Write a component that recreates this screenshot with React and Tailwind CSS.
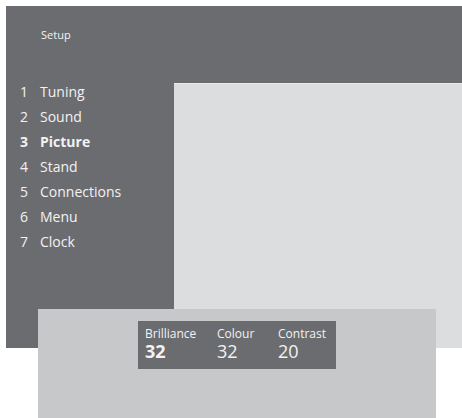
const menuItems = [
  { n: "1", label: "Tuning" },
  { n: "2", label: "Sound" },
  { n: "3", label: "Picture", active: true },
  { n: "4", label: "Stand" },
  { n: "5", label: "Connections" },
  { n: "6", label: "Menu" },
  { n: "7", label: "Clock" },
];

const values = [
  { label: "Brilliance", value: "32", bold: true, w: "w-[72px]" },
  { label: "Colour", value: "32", w: "w-[61px]" },
  { label: "Contrast", value: "20", w: "w-[58px]" },
];

export default function App() {
  return (
    <div className="w-[462px] h-[418px] bg-white overflow-hidden font-['Open_Sans',sans-serif] text-[#f2f2f2]">
      <div className="ml-[6px] mt-[6px] h-[342px] bg-[#6b6c70] flex">
        <div className="w-[168px] shrink-0 pl-[14px]">
          <p className="mt-[21px] ml-[21px] text-[11px] leading-[16px]">Setup</p>
          <ul className="mt-[36px]">
            {menuItems.map((item) => (
              <li
                key={item.n}
                className={`flex text-[14px] leading-[25px] ${item.active ? "font-bold" : ""}`}
              >
                <span className="w-[20px]">{item.n}</span>
                <span>{item.label}</span>
              </li>
            ))}
          </ul>
        </div>
        <div className="flex-1 pt-[77px] flex flex-col">
          <div className="flex-1 bg-[#dcdddf] border-t border-[#e8e9ea]" />
        </div>
      </div>

      <div className="relative -mt-[39px] ml-[38px] w-[398px] h-[109px] bg-[#c7c8ca] pt-[12px] pl-[100px]">
        <div className="w-[198px] h-[48px] bg-[#6b6c70] flex pl-[7px] pt-[6px]">
          {values.map((v) => (
            <div key={v.label} className={v.w}>
              <div className="text-[12px] leading-[14px]">{v.label}</div>
              <div className={`text-[18px] leading-[20px] ${v.bold ? "font-bold" : ""}`}>
                {v.value}
              </div>
            </div>
          ))}
        </div>
      </div>
    </div>
  );
}
